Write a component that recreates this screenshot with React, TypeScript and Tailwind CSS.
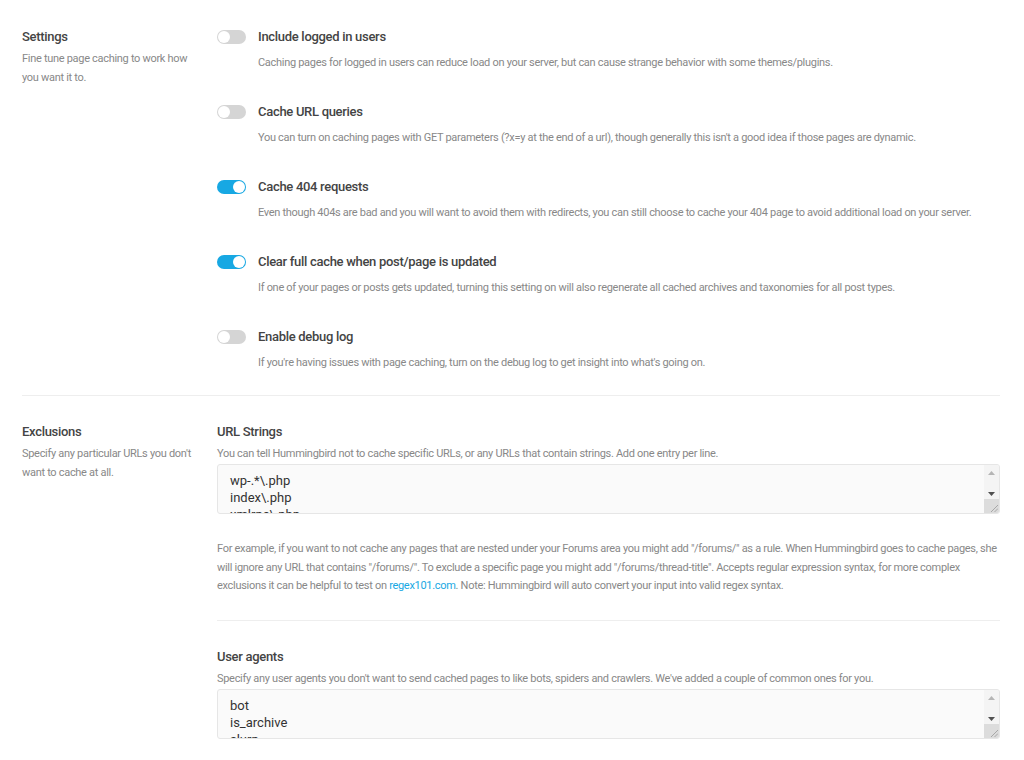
import React from 'react';

const toggles = [
  {
    title: 'Include logged in users',
    desc: 'Caching pages for logged in users can reduce load on your server, but can cause strange behavior with some themes/plugins.',
    on: false,
  },
  {
    title: 'Cache URL queries',
    desc: "You can turn on caching pages with GET parameters (?x=y at the end of a url), though generally this isn't a good idea if those pages are dynamic.",
    on: false,
  },
  {
    title: 'Cache 404 requests',
    desc: 'Even though 404s are bad and you will want to avoid them with redirects, you can still choose to cache your 404 page to avoid additional load on your server.',
    on: true,
  },
  {
    title: 'Clear full cache when post/page is updated',
    desc: 'If one of your pages or posts gets updated, turning this setting on will also regenerate all cached archives and taxonomies for all post types.',
    on: true,
  },
  {
    title: 'Enable debug log',
    desc: "If you're having issues with page caching, turn on the debug log to get insight into what's going on.",
    on: false,
  },
];

function Toggle({ on }: { on: boolean }) {
  return (
    <span
      className={`relative inline-block h-[14px] w-[29px] shrink-0 rounded-full ${
        on ? 'bg-[#17a8e3]' : 'bg-[#d5d5d5]'
      }`}
    >
      <span
        className={`absolute top-[1px] h-[12px] w-[12px] rounded-full bg-white ${
          on ? 'right-[1px]' : 'left-[1px]'
        }`}
      />
    </span>
  );
}

function SideLabel({ title, desc }: { title: string; desc: string }) {
  return (
    <div className="w-[195px] shrink-0 pr-[18px]">
      <h2 className="text-[13px] font-medium leading-[16px] text-[#444]">{title}</h2>
      <p className="mt-[4px] text-[11px] leading-[19px] text-[#888]">{desc}</p>
    </div>
  );
}

function ListBox({ lines }: { lines: string[] }) {
  return (
    <div className="mt-[2px] flex h-[50px] w-full overflow-hidden rounded-[3px] border border-[#e6e6e6] bg-[#fafafa]">
      <textarea
        readOnly
        defaultValue={lines.join('\n')}
        className="block h-full flex-1 resize-none overflow-hidden bg-transparent px-[12px] pt-[7px] text-[13px] leading-[17px] tracking-normal text-[#333] outline-none"
      />
      {/* scrollbar column */}
      <div className="flex w-[15px] shrink-0 flex-col items-center bg-[#f4f4f4]">
        <svg width="7" height="4" viewBox="0 0 7 4" className="mt-[6px]">
          <path d="M0 4 L3.5 0 L7 4 Z" fill="#b5b5b5" />
        </svg>
        <svg width="7" height="4" viewBox="0 0 7 4" className="mt-[17px]">
          <path d="M0 0 L3.5 4 L7 0 Z" fill="#505050" />
        </svg>
        <div className="mt-auto flex h-[14px] w-full items-end justify-end bg-[#dcdcdc] p-[1px]">
          <svg width="8" height="8" viewBox="0 0 8 8">
            <path d="M1 8 L8 1 M4.5 8 L8 4.5" stroke="#999" strokeWidth="0.8" />
          </svg>
        </div>
      </div>
    </div>
  );
}

export default function App() {
  return (
    <div
      className="min-h-screen bg-white pl-[22px] pr-[24px] pt-[29px] tracking-[-0.3px] text-[#333]"
      style={{ fontFamily: 'Roboto, "Noto Sans", sans-serif' }}
    >
      {/* Settings */}
      <div className="flex border-b border-[#eee] pb-[24px]">
        <SideLabel title="Settings" desc="Fine tune page caching to work how you want it to." />
        <div className="flex-1">
          {toggles.map((t, i) => (
            <div key={t.title} className={i > 0 ? 'mt-[33px]' : ''}>
              <div className="flex items-center gap-[12px]">
                <Toggle on={t.on} />
                <span className="text-[13px] font-medium leading-[16px] text-[#444]">{t.title}</span>
              </div>
              <p className="mt-[10px] pl-[41px] text-[11px] leading-[16px] text-[#888]">{t.desc}</p>
            </div>
          ))}
        </div>
      </div>

      {/* Exclusions */}
      <div className="flex pt-[28px]">
        <SideLabel title="Exclusions" desc="Specify any particular URLs you don't want to cache at all." />
        <div className="flex-1">
          <div className="border-b border-[#eee] pb-[24px]">
            <h3 className="text-[13px] font-medium leading-[16px] text-[#444]">URL Strings</h3>
            <p className="mt-[6px] text-[11px] leading-[16px] text-[#888]">
              You can tell Hummingbird not to cache specific URLs, or any URLs that contain strings. Add one entry per line.
            </p>
            <ListBox lines={['wp-.*\\.php', 'index\\.php', 'xmlrpc\\.php', 'wp-content/uploads/']} />
            <p className="mt-[26px] text-[11px] leading-[18.5px] text-[#888]">
              For example, if you want to not cache any pages that are nested under your Forums area you might add
              "/forums/" as a rule. When Hummingbird goes to cache pages, she will ignore any URL that contains
              "/forums/". To exclude a specific page you might add "/forums/thread-title". Accepts regular expression
              syntax, for more complex exclusions it can be helpful to test on{' '}
              <a href="#" className="text-[#17a8e3]">
                regex101.com
              </a>
              . Note: Hummingbird will auto convert your input into valid regex syntax.
            </p>
          </div>

          <div className="pt-[28px]">
            <h3 className="text-[13px] font-medium leading-[16px] text-[#444]">User agents</h3>
            <p className="mt-[6px] text-[11px] leading-[16px] text-[#888]">
              Specify any user agents you don't want to send cached pages to like bots, spiders and crawlers. We've added
              a couple of common ones for you.
            </p>
            <ListBox lines={['bot', 'is_archive', 'slurp', 'crawl', 'spider']} />
          </div>
        </div>
      </div>
    </div>
  );
}
